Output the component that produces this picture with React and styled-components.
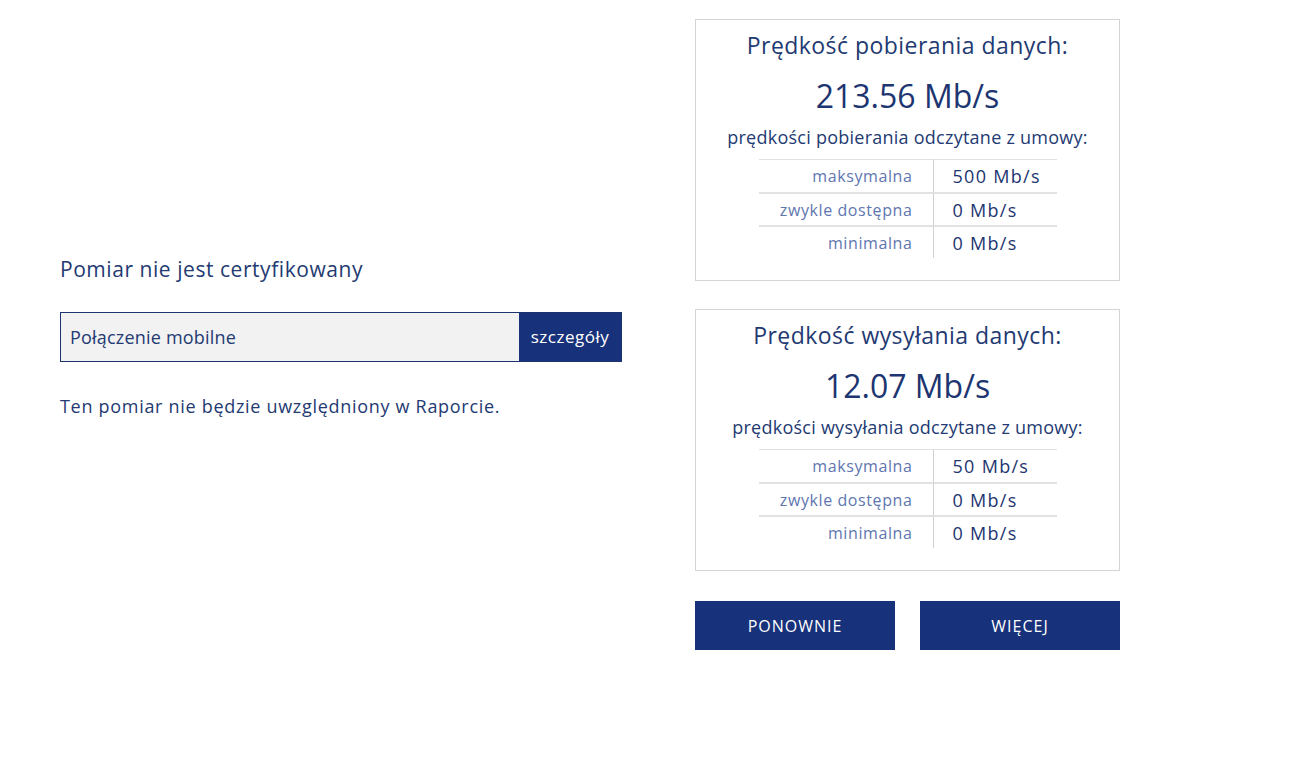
import React from 'react';
import styled, { createGlobalStyle } from 'styled-components';

const GlobalStyle = createGlobalStyle`
    html, body {
        margin: 0;
        padding: 0;
        background: #fff;
        font-family: 'Open Sans', 'Liberation Sans', sans-serif;
        color: #1d3570;
    }
`;

export const Page = styled.div`
    width: 1299px;
    box-sizing: border-box;
    padding: 19px 0 0 60px;
    display: flex;
    align-items: center;
    gap: 73px;
`;

export const LeftColumn = styled.div`
    width: 562px;
    display: flex;
    flex-direction: column;
    margin-top: 3px;
`;

export const Notice = styled.div`
    font-size: 21px;
    letter-spacing: 0.55px;
    color: #233a72;
    margin-bottom: 29px;
`;

export const ConnectionRow = styled.div`
    display: flex;
    height: 50px;
    border: 1px solid #1d3470;
    box-sizing: border-box;
`;

export const ConnectionLabel = styled.div`
    flex: 1;
    background: #f2f2f2;
    display: flex;
    align-items: center;
    padding-left: 9px;
    font-size: 18px;
    letter-spacing: 0.2px;
    color: #233a72;
`;

export const DetailsButton = styled.button`
    width: 102px;
    border: 0;
    background: #17317a;
    color: #fff;
    font-family: inherit;
    font-size: 17px;
    letter-spacing: 0.5px;
    cursor: pointer;
`;

export const Footnote = styled.div`
    margin-top: 32px;
    font-size: 18px;
    letter-spacing: 0.7px;
    color: #233a72;
`;

export const RightColumn = styled.div`
    width: 425px;
    display: flex;
    flex-direction: column;
    gap: 28px;
`;

export const SpeedBox = styled.div`
    height: 262px;
    box-sizing: border-box;
    border: 1px solid #d4d4d4;
    display: flex;
    flex-direction: column;
    align-items: center;
    padding-top: 10px;
`;

export const BoxTitle = styled.div`
    font-size: 23px;
    letter-spacing: 0.45px;
    color: #233a72;
    line-height: 30px;
`;

export const BigValue = styled.div`
    font-size: 32px;
    color: #1d3570;
    line-height: 40px;
    margin-top: 16px;
`;

export const Subtitle = styled.div`
    font-size: 18px;
    letter-spacing: 0.25px;
    color: #233a72;
    line-height: 24px;
    margin-top: 9px;
`;

export const Table = styled.div`
    margin-top: 10px;
    width: 298px;
    display: grid;
    grid-template-columns: 175px 123px;
`;

export const LabelCell = styled.div`
    height: 33px;
    box-sizing: border-box;
    border-top: ${p => (p.first ? '1px' : '2px')} solid #e2e2e2;
    border-right: 1px solid #d0d0d0;
    padding-right: 20px;
    display: flex;
    align-items: center;
    justify-content: flex-end;
    font-size: 16px;
    letter-spacing: 0.6px;
    color: #6076af;
`;

export const ValueCell = styled.div`
    height: 33px;
    box-sizing: border-box;
    border-top: ${p => (p.first ? '1px' : '2px')} solid #e2e2e2;
    display: flex;
    align-items: center;
    padding-left: 19px;
    font-size: 18px;
    letter-spacing: 1.3px;
    color: #1d3570;
`;

export const ButtonRow = styled.div`
    display: flex;
    gap: 25px;
    margin-top: 2px;
`;

export const ActionButton = styled.button`
    width: 200px;
    height: 49px;
    border: 0;
    background: #17317a;
    color: #fff;
    font-family: inherit;
    font-size: 16px;
    letter-spacing: 1px;
    text-transform: uppercase;
    cursor: pointer;
`;

const SpeedCard = ({ title, value, subtitle, rows }) => (
    <SpeedBox>
        <BoxTitle>{title}</BoxTitle>
        <BigValue>{value}</BigValue>
        <Subtitle>{subtitle}</Subtitle>
        <Table>
            {rows.map((r, i) => (
                <React.Fragment key={r.label}>
                    <LabelCell first={i === 0}>{r.label}</LabelCell>
                    <ValueCell first={i === 0}>{r.value}</ValueCell>
                </React.Fragment>
            ))}
        </Table>
    </SpeedBox>
);

export default function App() {
    return (
        <>
            <GlobalStyle />
            <Page>
                <LeftColumn>
                    <Notice>Pomiar nie jest certyfikowany</Notice>
                    <ConnectionRow>
                        <ConnectionLabel>Połączenie mobilne</ConnectionLabel>
                        <DetailsButton>szczegóły</DetailsButton>
                    </ConnectionRow>
                    <Footnote>Ten pomiar nie będzie uwzględniony w Raporcie.</Footnote>
                </LeftColumn>
                <RightColumn>
                    <SpeedCard
                        title="Prędkość pobierania danych:"
                        value="213.56 Mb/s"
                        subtitle="prędkości pobierania odczytane z umowy:"
                        rows={[
                            { label: 'maksymalna', value: '500 Mb/s' },
                            { label: 'zwykle dostępna', value: '0 Mb/s' },
                            { label: 'minimalna', value: '0 Mb/s' },
                        ]}
                    />
                    <SpeedCard
                        title="Prędkość wysyłania danych:"
                        value="12.07 Mb/s"
                        subtitle="prędkości wysyłania odczytane z umowy:"
                        rows={[
                            { label: 'maksymalna', value: '50 Mb/s' },
                            { label: 'zwykle dostępna', value: '0 Mb/s' },
                            { label: 'minimalna', value: '0 Mb/s' },
                        ]}
                    />
                    <ButtonRow>
                        <ActionButton>Ponownie</ActionButton>
                        <ActionButton>Więcej</ActionButton>
                    </ButtonRow>
                </RightColumn>
            </Page>
        </>
    );
}
